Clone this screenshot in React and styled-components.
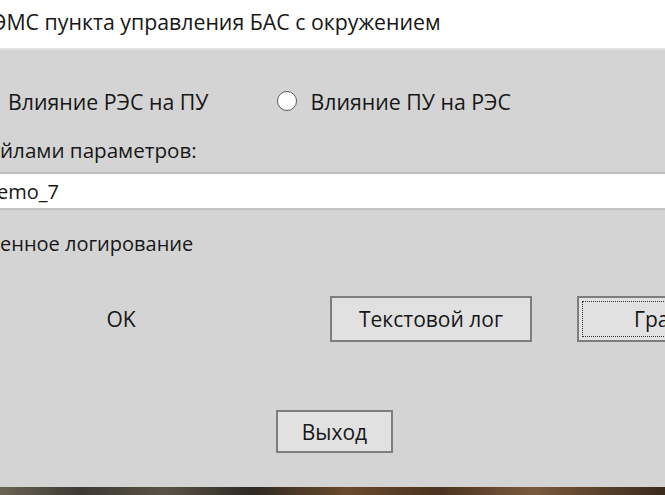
import React from "react"
import styled, { createGlobalStyle } from "styled-components"

// -- GLOBAL --
const GlobalStyle = createGlobalStyle`
  html, body { margin: 0; padding: 0; background: #d4d4d4; }
  body { font-family: "Open Sans", "Noto Sans", sans-serif; color: #171717; }
`

// -- STYLED COMPONENTS --
const Screen = styled.div`
  width: 665px;
  height: 495px;
  overflow: hidden;
  display: flex;
  flex-direction: column;
`

const TitleBar = styled.div`
  height: 50px;
  box-sizing: border-box;
  background: #ffffff;
  border-bottom: 2px solid #e2e2e2;
  display: flex;
  align-items: center;
  padding-bottom: 6px;
  font-size: 21.3px;
  white-space: nowrap;
  text-indent: -7px;
`

const Body = styled.div`
  flex: 1;
  background: #d4d4d4;
  display: flex;
  flex-direction: column;
  padding-top: 37px;
`

const RadioRow = styled.div`
  display: flex;
  align-items: center;
  height: 28px;
  font-size: 21.3px;
  white-space: nowrap;
`

const RadioLabel = styled.label`
  display: flex;
  align-items: center;
  gap: 13px;
  margin-left: ${p => p.$offset}px;
`

const RadioDot = styled.span`
  width: 18px;
  height: 18px;
  border-radius: 50%;
  border: 1.5px solid #5a5a5a;
  background: #ffffff;
  box-sizing: content-box;
`

const Caption = styled.div`
  height: 28px;
  line-height: 28px;
  font-size: ${p => p.$size}px;
  white-space: nowrap;
  margin-top: ${p => p.$top}px;
`

const TextField = styled.div`
  margin-top: 8px;
  height: 38px;
  box-sizing: border-box;
  background: #ffffff;
  border-top: 2px solid #bdbdbd;
  border-bottom: 2px solid #c4c4c4;
  display: flex;
  align-items: center;
  font-size: 20px;
  white-space: nowrap;
  text-indent: -3px;
`

const ButtonRow = styled.div`
  display: flex;
  margin-top: ${p => p.$top}px;
  padding-left: ${p => p.$left}px;
`

const Button = styled.div`
  flex: none;
  width: ${p => p.$w}px;
  height: ${p => p.$h}px;
  margin-left: ${p => p.$ml || 0}px;
  box-sizing: border-box;
  background: ${p => (p.$flat ? "transparent" : "#e1e1e1")};
  border: 2px solid ${p => (p.$flat ? "transparent" : "#7d7d7d")};
  display: flex;
  align-items: center;
  justify-content: center;
  font-size: 21px;
  white-space: nowrap;
  padding: 3px;
`

const FocusBox = styled.div`
  flex: 1;
  align-self: stretch;
  border: 1px dotted #333;
  display: flex;
  align-items: center;
  justify-content: center;
`

const Desktop = styled.div`
  height: 8px;
  background: linear-gradient(90deg, #6b6455 0%, #3d3a33 12%, #5a5245 25%, #2e2a24 38%, #6a4a2c 52%, #4a3320 66%, #7a5a3c 80%, #3a2a1c 100%);
`

export default function App() {
  return (
    <>
      <GlobalStyle />
      <Screen>
        <TitleBar>ЭМС пункта управления БАС с окружением</TitleBar>
        <Body>
          <RadioRow>
            <RadioLabel $offset={8}>Влияние РЭС на ПУ</RadioLabel>
            <RadioLabel $offset={69}>
              <RadioDot />
              Влияние ПУ на РЭС
            </RadioLabel>
          </RadioRow>
          <Caption $top={21} $size={20.6}>йлами параметров:</Caption>
          <TextField>emo_7</TextField>
          <Caption $top={20} $size={20}>енное логирование</Caption>
          <ButtonRow $top={38} $left={20}>
            <Button $w={202} $h={46} $flat>OK</Button>
            <Button $w={202} $h={46} $ml={108}>Текстовой лог</Button>
            <Button $w={202} $h={46} $ml={45}>
              <FocusBox>Графики</FocusBox>
            </Button>
          </ButtonRow>
          <ButtonRow $top={68} $left={276}>
            <Button $w={117} $h={43}>Выход</Button>
          </ButtonRow>
        </Body>
        <Desktop />
      </Screen>
    </>
  )
}
